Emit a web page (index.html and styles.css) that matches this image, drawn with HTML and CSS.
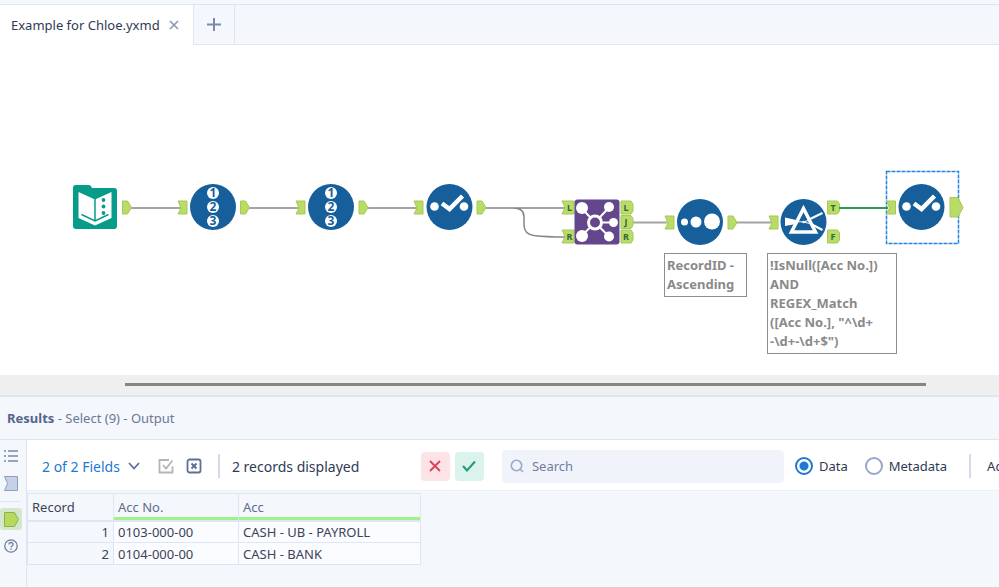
FILE: index.html
```html
<!DOCTYPE html>
<html lang="en">
<head>
    <meta charset="UTF-8">
    <meta name="viewport" content="width=device-width, initial-scale=1.0">
    <title>Example for Chloe.yxmd</title>
    <link rel="stylesheet" href="styles.css">
</head>
<body>
    <nav class="tabs">
        <div class="tab">
            <span>Example for Chloe.yxmd</span>
            <button class="tab-close" type="button" aria-label="Close tab">
                <svg width="10" height="10" viewBox="0 0 10 10"><path d="M1 1l8 8M9 1l-8 8" stroke="#8593b3" stroke-width="1.5"/></svg>
            </button>
        </div>
        <button class="tab-add" type="button" aria-label="New tab">
            <svg width="14" height="14" viewBox="0 0 14 14"><path d="M7 1v13M0 7.5h14" stroke="#7c89a8" stroke-width="2"/></svg>
        </button>
    </nav>

    <main class="canvas">
        <svg class="workflow" width="999" height="330" viewBox="0 45 999 330">
            <defs>
                <path id="in" d="M0 0h9v13h-9l3-6z" fill="#b9dc66" stroke="#a5c95a" stroke-width="1"/>
                <path id="out" d="M0 0h5l4 6.500l-4 6.500h-5z" fill="#b9dc66" stroke="#a5c95a" stroke-width="1"/>
                <path id="in-wide" d="M0 0h12v13h-12l3-6.500z" fill="#b9dc66" stroke="#a5c95a" stroke-width="1"/>
                <path id="out-wide" d="M0 0h10l2 3v7l-2 3h-10z" fill="#b9dc66" stroke="#a5c95a" stroke-width="1"/>
                <g id="record-id">
                    <circle r="23" fill="#175f9b"/>
                    <g fill="#fff"><circle cy="-14" r="6"/><circle r="6"/><circle cy="14" r="6"/></g>
                    <g class="digits">
                        <text y="-10">1</text>
                        <text y="4">2</text>
                        <text y="18">3</text>
                    </g>
                </g>
                <g id="select">
                    <circle r="23" fill="#175f9b"/>
                    <circle cx="-15" cy="-.5" r="4.300" fill="#fff"/>
                    <circle cx="14.500" cy="-.5" r="4.300" fill="#fff"/>
                    <path d="M-7.500 -3.500l7.500 5.500l13 -13" fill="none" stroke="#fff" stroke-width="4.500"/>
                </g>
            </defs>

            <!-- connections -->
            <g fill="none" stroke="#a3a3a3" stroke-width="2">
                <path d="M131 208h50M249 208h50M367 208h50M633 222.500h34M736 222.500h36"/>
                <path d="M485 208h81M485 208h28q11 0 11 9v8q0 9 10 10.500q12 1.500 31 1.500" stroke="#858585" stroke-width="1.500"/>
            </g>

            <!-- input data -->
            <path d="M76 185h13q2 0 3 3h22q3 0 3 3v35q0 3 -3 3h-38q-3 0 -3 -3v-38q0 -3 3 -3z" fill="#079c8a"/>
            <path d="M78.500 192l16.500 7.500l16.500 -7.500v26l-16.500 7.500l-16.500 -7.500z" fill="#fff"/>
            <path d="M95 199v22M81.500 214.500l13.500 6.500l13.500 -6.500" fill="none" stroke="#079c8a" stroke-width="1.500"/>
            <g fill="#079c8a"><circle cx="103.500" cy="200" r="1.900"/><circle cx="103.500" cy="206.500" r="1.900"/><circle cx="103.500" cy="213" r="1.900"/></g>
            <use href="#out" x="122.500" y="201"/>

            <use href="#in" x="178" y="201"/>
            <use href="#record-id" x="213" y="207"/>
            <use href="#out" x="240.500" y="201"/>

            <use href="#in" x="296" y="201"/>
            <use href="#record-id" x="331" y="207"/>
            <use href="#out" x="359" y="201"/>

            <use href="#in" x="414" y="201"/>
            <use href="#select" x="449.500" y="207"/>
            <use href="#out" x="477" y="201"/>

            <!-- join -->
            <use href="#in-wide" x="562" y="201"/>
            <use href="#in-wide" x="562" y="230"/>
            <rect x="574.500" y="199.500" width="45" height="45" rx="3" fill="#64468c"/>
            <path d="M595 222.500l-13 -14M595 222.500l-13 13M595 222.500l14 -15M595 222.500h18M595 222.500l14 14" stroke="#fff" stroke-width="2"/>
            <circle cx="595" cy="222.500" r="6.500" fill="#64468c" stroke="#fff" stroke-width="3"/>
            <g fill="#fff"><circle cx="582" cy="208" r="6"/><circle cx="582" cy="236" r="6"/><circle cx="609" cy="207" r="5"/><circle cx="613.500" cy="222.500" r="4.500"/><circle cx="609" cy="236.500" r="5"/></g>
            <use href="#out-wide" x="621" y="201"/>
            <use href="#out-wide" x="621" y="215.500"/>
            <use href="#out-wide" x="621" y="230"/>

            <!-- sort -->
            <use href="#in" x="665" y="216"/>
            <circle cx="700" cy="222" r="23" fill="#175f9b"/>
            <g fill="#fff"><circle cx="684.500" cy="222" r="3.500"/><circle cx="696" cy="222" r="5.500"/><circle cx="712" cy="221.500" r="8"/></g>
            <use href="#out" x="728" y="216"/>

            <!-- filter -->
            <use href="#in" x="769" y="216"/>
            <circle cx="803.500" cy="222" r="23" fill="#175f9b"/>
            <path d="M803.500 208.500l-12 23.500h24z" fill="none" stroke="#fff" stroke-width="3.500"/>
            <path d="M785 217.500l11 2.500v4l-11 2z" fill="#fff"/>
            <path d="M809 219.500l13.500 -6.500M811 224l11.500 6" stroke="#fff" stroke-width="2"/>
            <path d="M795 221.500l8.500 .5l6 -2M803.500 222l6 1.500" fill="none" stroke="#fff" stroke-width="1"/>
            <circle cx="803.500" cy="222" r="1.200" fill="#fff"/>
            <use href="#out-wide" x="827.500" y="201"/>
            <use href="#out-wide" x="827.500" y="230"/>

            <g class="anchors">
                <text x="569.500" y="211">L</text>
                <text x="569.500" y="240">R</text>
                <text x="626" y="211">L</text>
                <text x="626" y="225">J</text>
                <text x="626" y="240">R</text>
                <text x="833" y="211">T</text>
                <text x="833" y="240">F</text>
            </g>

            <!-- selected tool -->
            <rect x="886.500" y="171.500" width="72" height="72" fill="none" stroke="#2385dc" stroke-width="1.500" stroke-dasharray="4 1"/>
            <use href="#in" x="886.500" y="201"/>
            <path d="M839 208h49" stroke="#2a9e4c" stroke-width="2"/>
            <use href="#select" x="921.500" y="207"/>
            <path d="M950 197.500h8l5 10l-5 9.500h-8z" fill="#b9dc66" stroke="#a5c95a"/>
        </svg>
        <p class="note note-sort">RecordID -<br>Ascending</p>
        <p class="note note-filter">!IsNull([Acc No.])<br>AND<br>REGEX_Match<br>([Acc No.], "^\d+<br>-\d+-\d+$")</p>
    </main>

    <div class="scrollbar"><div class="thumb"></div></div>

    <section class="results">
        <h2 class="results-title"><strong>Results</strong> - Select (9) - Output</h2>
        <div class="results-body">
            <aside class="rail">
                <button type="button" aria-label="Messages">
                    <svg width="14" height="12" viewBox="0 0 14 12"><path d="M0 1h2M4 1h10M0 6h2M4 6h10M0 11h2M4 11h10" stroke="#7b88a8" stroke-width="1.500"/></svg>
                </button>
                <button type="button" aria-label="Input">
                    <svg width="14" height="15" viewBox="0 0 14 15"><path d="M.5 .5h13v14h-13l3 -7z" fill="#c6d0e6" stroke="#8e9dc2"/></svg>
                </button>
                <hr>
                <button class="active" type="button" aria-label="Output">
                    <svg width="15" height="15" viewBox="0 0 15 15"><path d="M.5 .5h10l4 7l-4 7h-10z" fill="#b7da5c" stroke="#8fb052"/></svg>
                </button>
                <button type="button" aria-label="Help">
                    <svg width="14" height="14" viewBox="0 0 14 14" fill="none" stroke="#6f7d9f" stroke-width="1.300"><circle cx="7" cy="7" r="6.200"/><path d="M5 5.500q0 -2 2 -2t2 2q0 1 -1 1.500t-1 1.500M7 9.500v1.400"/></svg>
                </button>
            </aside>
            <div class="pane">
                <div class="toolbar">
                    <button class="fields" type="button">
                        2 of 2 Fields
                        <svg width="12" height="8" viewBox="0 0 12 8"><path d="M1 1l5 5.500l5 -5.500" fill="none" stroke="#5f6f95" stroke-width="1.800"/></svg>
                    </button>
                    <button class="icon" type="button" aria-label="Select all">
                        <svg width="16" height="16" viewBox="0 0 16 16" fill="none" stroke="#b5b5b5" stroke-width="1.800"><path d="M11 2h-9.500v12.500h13v-6"/><path d="M5 7l3 3.500l6.500 -8"/></svg>
                    </button>
                    <button class="icon" type="button" aria-label="Clear selection">
                        <svg width="16" height="16" viewBox="0 0 16 16" fill="none" stroke="#5f6f93"><rect x="1.500" y="1.500" width="13" height="13" rx="2" stroke-width="1.800"/><path d="M5.500 5.500l5 5M10.500 5.500l-5 5" stroke-width="2"/></svg>
                    </button>
                    <span class="divider"></span>
                    <span class="count">2 records displayed</span>
                    <button class="square reject" type="button" aria-label="Cancel">
                        <svg width="12" height="12" viewBox="0 0 12 12"><path d="M1 1l10 10M11 1l-10 10" stroke="#dc4058" stroke-width="1.800"/></svg>
                    </button>
                    <button class="square accept" type="button" aria-label="Apply">
                        <svg width="14" height="12" viewBox="0 0 14 12"><path d="M1 6l4 4.500l8 -9" fill="none" stroke="#23987a" stroke-width="2"/></svg>
                    </button>
                    <label class="search">
                        <svg width="14" height="14" viewBox="0 0 14 14" fill="none" stroke="#9aaacb" stroke-width="1.600"><circle cx="6.500" cy="6.500" r="5.200"/><path d="M10.200 10.200l2.800 2.800"/></svg>
                        <input type="text" placeholder="Search" aria-label="Search">
                    </label>
                    <label class="radio"><input type="radio" name="view" checked>Data</label>
                    <label class="radio"><input type="radio" name="view">Metadata</label>
                    <span class="divider last"></span>
                    <button class="actions" type="button">Actions</button>
                </div>
                <table class="grid">
                    <thead>
                        <tr>
                            <th class="record">Record</th>
                            <th class="acc-no">Acc No.</th>
                            <th class="acc">Acc</th>
                        </tr>
                    </thead>
                    <tbody>
                        <tr>
                            <td>1</td>
                            <td>0103-000-00</td>
                            <td>CASH - UB - PAYROLL</td>
                        </tr>
                        <tr>
                            <td>2</td>
                            <td>0104-000-00</td>
                            <td>CASH - BANK</td>
                        </tr>
                    </tbody>
                </table>
            </div>
        </div>
    </section>
</body>
</html>
```
FILE: styles.css
```css
* {
    box-sizing: border-box;
}
body {
    margin: 0;
    min-height: 100vh;
    display: flex;
    flex-direction: column;
    font-family: "Noto Sans", "Open Sans", sans-serif;
    font-size: 13px;
    color: #2f3a55;
    background-color: #fff;
    overflow: hidden;
}
button {
    display: flex;
    align-items: center;
    justify-content: center;
    padding: 0;
    border: none;
    background: none;
    font: inherit;
    cursor: pointer;
}
svg {
    display: block;
    flex: none;
}

/* tabs */
.tabs {
    display: flex;
    height: 45px;
    padding-top: 4px;
    background: linear-gradient(#dfe5f2, #dfe5f2) 0 4px / 100% 1px no-repeat #f4f7fc;
    border-bottom: 1px solid #dfe5f2;
}
.tab {
    display: flex;
    align-items: center;
    gap: 9px;
    height: 41px;
    padding: 0 14px 0 11px;
    background-color: #fff;
    border-top: 1px solid #dfe5f2;
    border-right: 1px solid #dfe5f2;
}
.tab-add {
    width: 41px;
    border-right: 1px solid #dfe5f2;
}

/* workflow canvas */
.canvas {
    position: relative;
    height: 330px;
    overflow: hidden;
}
.digits {
    font-size: 12px;
    font-weight: bold;
    fill: #175f9b;
    text-anchor: middle;
}
.anchors {
    font-size: 9px;
    font-weight: bold;
    fill: #33683c;
    text-anchor: middle;
}
.note {
    position: absolute;
    margin: 0;
    padding: 2px;
    border: 1px solid #8e8e8e;
    background-color: #fff;
    color: #8a8a8a;
    font-weight: bold;
    line-height: 19px;
    white-space: nowrap;
}
.note-sort {
    left: 664px;
    top: 208px;
    width: 83px;
}
.note-filter {
    left: 767px;
    top: 208px;
    width: 130px;
}
.scrollbar {
    height: 20px;
    padding: 8px 73px 0 125px;
    background-color: #efefef;
}
.thumb {
    height: 3px;
    background-color: #858585;
}

/* results */
.results {
    flex: 1;
    display: flex;
    flex-direction: column;
    border-top: 2px solid #dfe5f2;
    background-color: #f4f7fc;
}
.results-title {
    margin: 0;
    padding-left: 7px;
    font-size: 13px;
    font-weight: normal;
    line-height: 42px;
    color: #6b7797;
    border-bottom: 1px solid #dfe5f2;
}
.results-title strong {
    color: #56658c;
}
.results-body {
    flex: 1;
    display: flex;
}
.rail {
    display: flex;
    flex-direction: column;
    width: 27px;
    padding-top: 5px;
    border-right: 1px solid #dfe5f2;
}
.rail button {
    width: 22px;
    height: 22px;
}
.rail button + button {
    margin-top: 5px;
}
.rail hr {
    width: 20px;
    margin: 7px 0 6px;
    border: none;
    border-top: 1px solid #dfe5f2;
}
.rail .active {
    background-color: #d3e8cb;
    border-radius: 3px;
}
.pane {
    flex: 1;
    min-width: 0;
}
.toolbar {
    display: flex;
    align-items: center;
    height: 51px;
    padding: 2px 0 0 15px;
    background-color: #fff;
    border-bottom: 1px solid #edf0f6;
    white-space: nowrap;
    overflow: hidden;
}
.toolbar > * {
    flex: none;
}
.fields {
    gap: 8px;
    margin-right: 18px;
    font-size: 14px;
    color: #1f78d1;
}
.icon {
    margin-right: 12px;
}
.divider {
    width: 2px;
    height: 24px;
    margin: 0 12px 0 4px;
    background-color: #d3daea;
}
.divider.last {
    margin: 0 16px 0 22px;
}
.count {
    width: 189px;
    font-size: 14px;
}
.square {
    width: 29px;
    height: 29px;
    margin-right: 5px;
    border-radius: 4px;
}
.reject {
    background-color: #fde3e6;
}
.accept {
    margin-right: 10px;
    background-color: #dbf3ec;
}
.search {
    display: flex;
    align-items: center;
    gap: 8px;
    width: 282px;
    height: 33px;
    margin: 0 11px 0 8px;
    padding-left: 8px;
    border-radius: 4px;
    background-color: #f0f3f9;
}
.search input {
    flex: 1;
    min-width: 0;
    padding: 0;
    border: none;
    outline: none;
    background: none;
    font: inherit;
}
.search input::placeholder {
    color: #717e9e;
    opacity: 1;
}
.radio {
    display: flex;
    align-items: center;
    gap: 6px;
}
.radio + .radio {
    margin-left: 17px;
}
.radio input {
    appearance: none;
    width: 18px;
    height: 18px;
    margin: 0;
    border: 2px solid #97a5c8;
    border-radius: 50%;
}
.radio input:checked {
    border-color: #1f78d1;
    background: radial-gradient(circle, #1f78d1 4px, #fff 5px);
}
.actions {
    color: #2f3a55;
}

/* data grid */
.grid {
    margin-top: 2px;
    border-collapse: collapse;
    table-layout: fixed;
    width: 394px;
    color: #3c4355;
}
.grid th,
.grid td {
    height: 22px;
    padding: 0 4px;
    border: 1px solid #dfe5f2;
    font-weight: normal;
    line-height: 18px;
    text-align: left;
    background-color: #fafcff;
}
.grid th {
    height: 27px;
    color: #606d8c;
    background-color: #f4f7fc;
    border-bottom-width: 2px;
    box-shadow: inset 0 -3px #9ff386;
}
.grid .record {
    width: 86px;
    color: #3c4355;
    box-shadow: none;
}
.grid .acc-no {
    width: 125px;
}
.grid td:first-child {
    text-align: right;
    background-color: #f4f7fc;
}
```
